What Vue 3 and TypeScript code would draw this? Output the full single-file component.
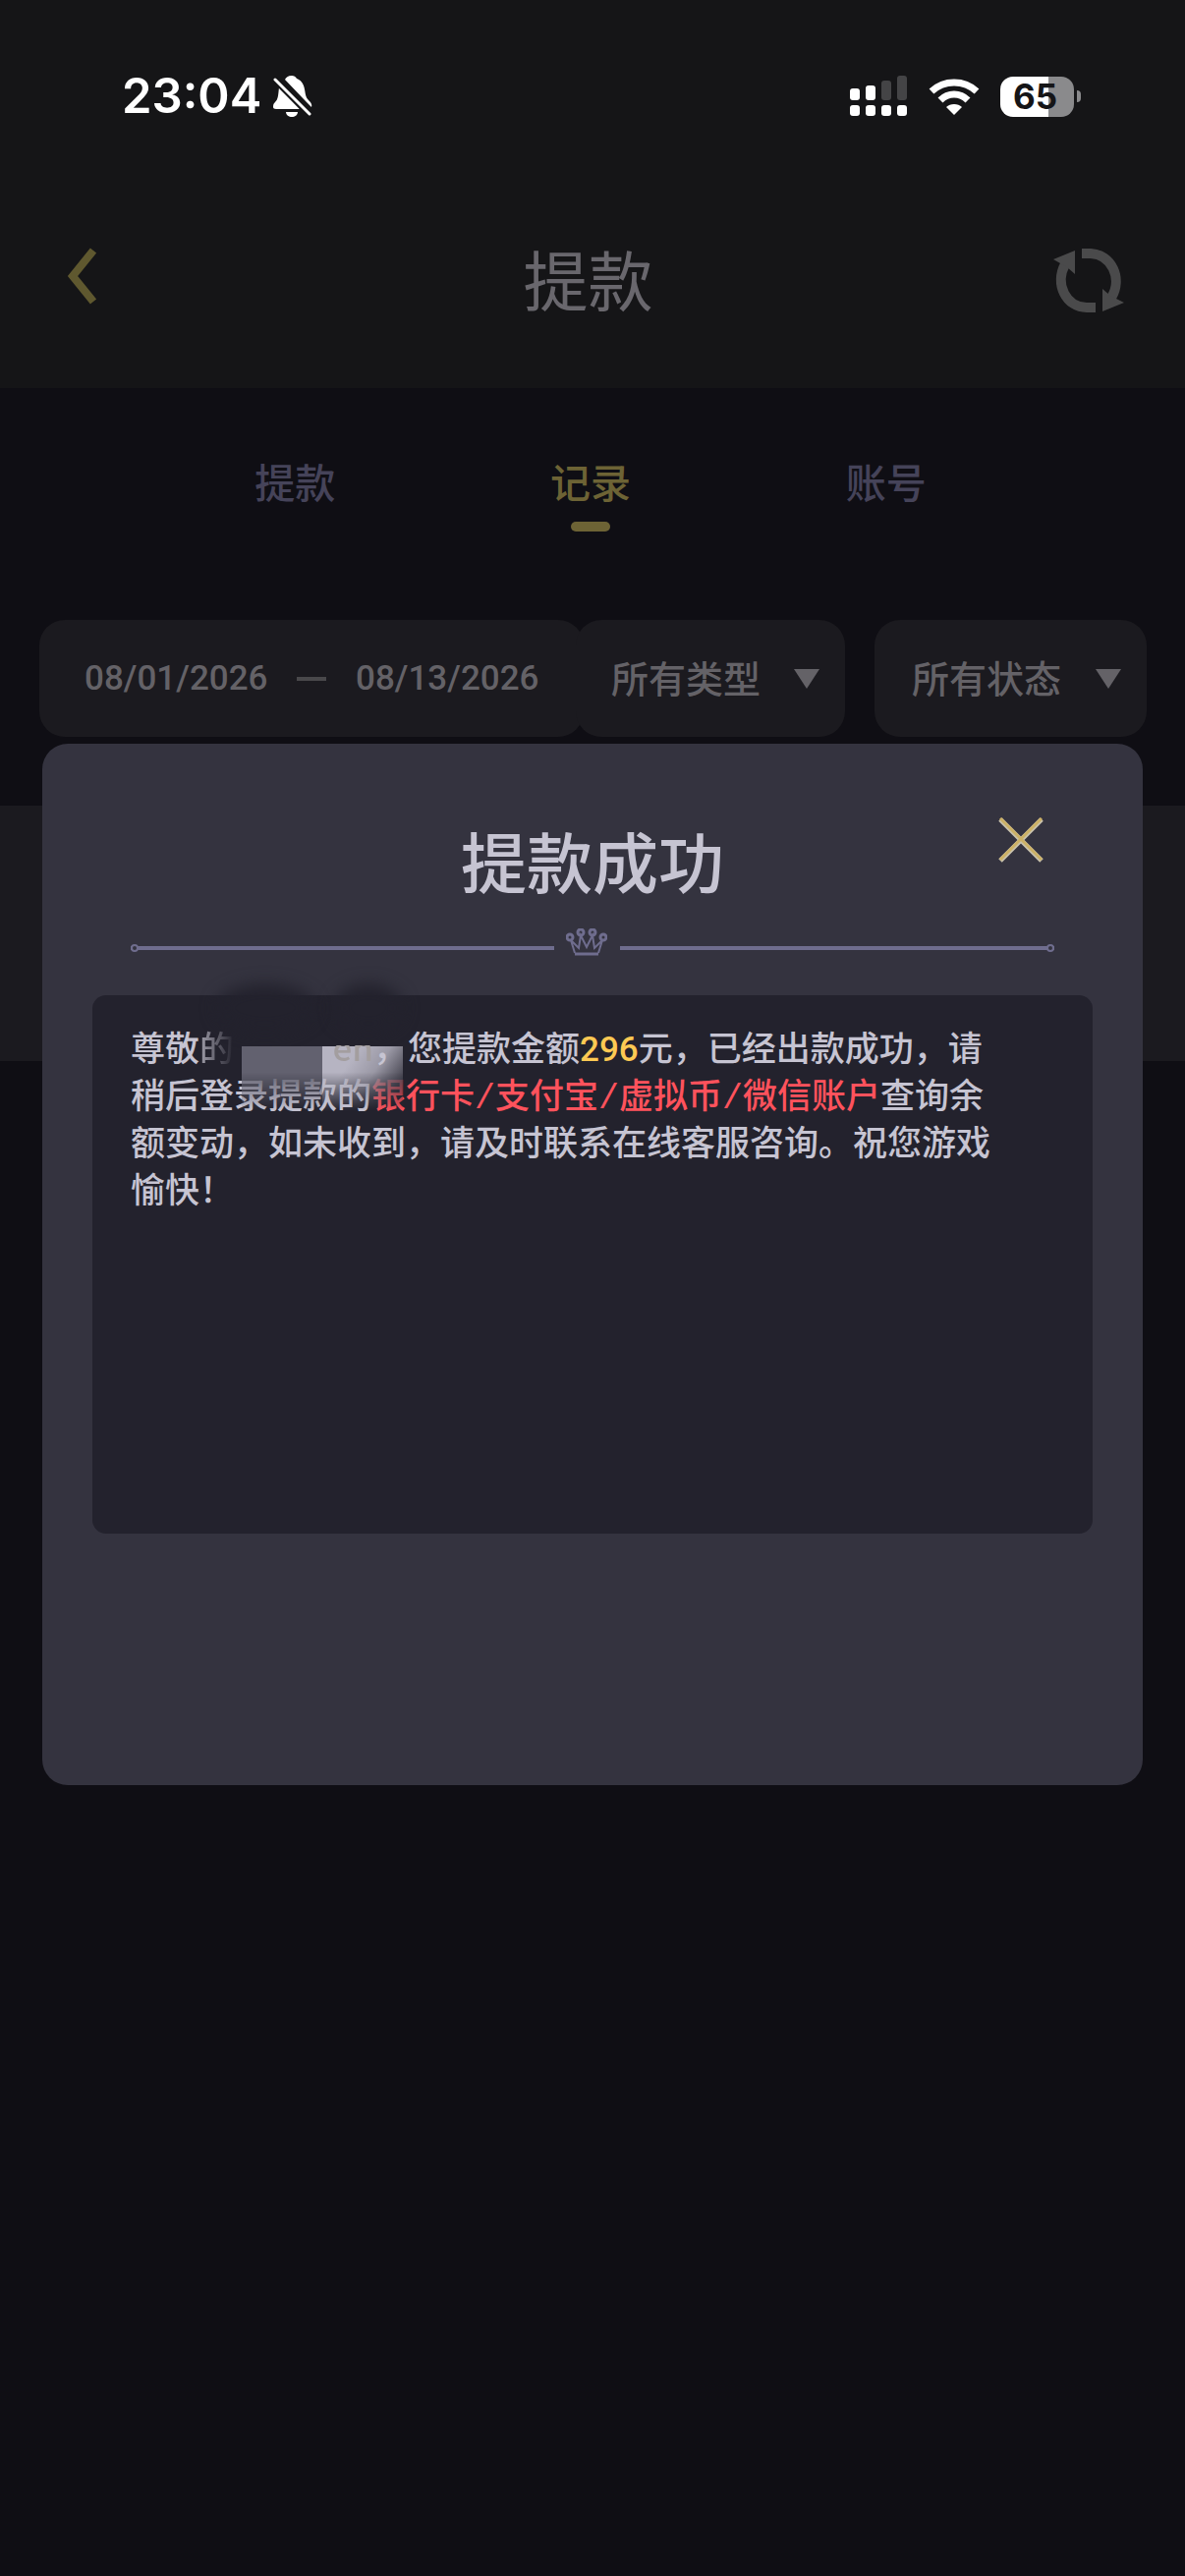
<script setup lang="ts">
import { ref } from 'vue'

interface Tab { id: string; label: string }

const tabs: Tab[] = [
  { id: 'withdraw', label: '提款' },
  { id: 'records', label: '记录' },
  { id: 'accounts', label: '账号' },
]
const active = ref('records')
const startDate = ref('08/01/2026')
const endDate = ref('08/13/2026')
const open = ref(true)
</script>

<template>
  <div class="page">
    <header class="header">
      <div class="status">
        <div class="clock">
          <span class="time">23:04</span>
          <svg class="bell" viewBox="0 0 40 42" aria-hidden="true">
            <path d="M19 0c-4 0-6 2-7 4L34 27l5 5c1-3-1-5-3-7-3-3-3-6-4-11C31 7 27 4 24 3 23 1 21 0 19 0z" fill="#fff" />
            <path d="M6 12c-1 9-1 12-4 15-2 2-2 3-2 5 0 1 1 2 3 2h24z" fill="#fff" />
            <path d="M13 37h12c0 3-3 5-6 5s-6-2-6-5z" fill="#fff" />
            <path d="M2 4l35 35" stroke="#151517" stroke-width="7" />
            <path d="M2 4l35 35" stroke="#fff" stroke-width="3" stroke-linecap="round" />
          </svg>
        </div>
        <div class="indicators">
          <svg class="signal" viewBox="0 0 58 42" aria-hidden="true">
            <g fill="#fff">
              <rect x="0" y="13" width="10" height="12" rx="3" />
              <rect x="16" y="10" width="10" height="15" rx="3" />
              <rect x="0" y="30" width="10" height="11" rx="3" />
              <rect x="16" y="30" width="10" height="11" rx="3" />
              <rect x="32" y="30" width="10" height="11" rx="3" />
              <rect x="48" y="30" width="10" height="11" rx="3" />
            </g>
            <g fill="#444446">
              <rect x="32" y="5" width="10" height="20" rx="3" />
              <rect x="48" y="0" width="10" height="25" rx="3" />
            </g>
          </svg>
          <svg class="wifi" viewBox="0 0 52 38" aria-hidden="true">
            <path d="M3 14C16 2 36 2 49 14" fill="none" stroke="#fff" stroke-width="7" />
            <path d="M12 23c8-8 20-8 28 0" fill="none" stroke="#fff" stroke-width="7" />
            <path d="M26 38l-8-8c4-4 12-4 16 0z" fill="#fff" />
          </svg>
          <div class="battery"><span class="level">65</span><i class="nub"></i></div>
        </div>
      </div>
      <div class="nav">
        <button class="icon-btn back" type="button" aria-label="返回">
          <svg viewBox="0 0 32 58" width="32" height="58"><path d="M27 3L6 29l21 26" fill="none" stroke="#5f582f" stroke-width="8" /></svg>
        </button>
        <h1 class="title">提款</h1>
        <button class="icon-btn" type="button" aria-label="刷新">
          <svg viewBox="0 0 72 66" width="72" height="66" fill="none">
            <path d="M29 5h9c21 1 33 25 21 45" stroke="#4a4a4b" stroke-width="10" />
            <path d="M43 60h-9C13 60 1 36 12 16" stroke="#4a4a4b" stroke-width="10" />
            <path d="M0 11L22 2v24l-8-7z" fill="#4a4a4b" />
            <path d="M72 55L50 64V41l8 7z" fill="#4a4a4b" />
          </svg>
        </button>
      </div>
    </header>

    <nav class="tabs">
      <button
        v-for="t in tabs"
        :key="t.id"
        type="button"
        class="tab"
        :class="{ active: active === t.id }"
        @click="active = t.id"
      >{{ t.label }}</button>
    </nav>

    <form class="filters" @submit.prevent>
      <div class="pill dates">
        <input v-model="startDate" class="date" type="text" aria-label="开始日期" />
        <span class="dash"></span>
        <input v-model="endDate" class="date" type="text" aria-label="结束日期" />
      </div>
      <div class="pill choice type">
        <select aria-label="类型"><option>所有类型</option></select>
        <svg class="caret" viewBox="0 0 26 20" aria-hidden="true"><path d="M0 0h26L13 20z" fill="#646267" /></svg>
      </div>
      <div class="pill choice state">
        <select aria-label="状态"><option>所有状态</option></select>
        <svg class="caret" viewBox="0 0 26 20" aria-hidden="true"><path d="M0 0h26L13 20z" fill="#646267" /></svg>
      </div>
    </form>
    <div class="record"></div>

    <section v-if="open" class="modal" role="dialog" aria-labelledby="modal-title">
      <h2 id="modal-title" class="modal-title">提款成功</h2>
      <button class="close" type="button" aria-label="关闭" @click="open = false">
        <svg viewBox="0 0 46 46" width="46" height="46">
          <path d="M2 2l42 42M44 2L2 44" stroke="#c9c2ae" stroke-width="5" />
          <path d="M2 1l42 42M44 1L2 43" stroke="#ccb166" stroke-width="3" />
        </svg>
      </button>
      <div class="divider">
        <i class="line left"></i>
        <svg class="crown" viewBox="0 0 42 28" fill="none" stroke="#6f6d8e" stroke-width="3" aria-hidden="true">
          <path d="M9 25L5 12l8 8 2-13 6 12 6-12 2 13 8-8-4 13" stroke-width="2" />
          <path d="M9 26h24" />
          <circle cx="4" cy="9" r="3" /><circle cx="15" cy="4" r="3" />
          <circle cx="27" cy="4" r="3" /><circle cx="38" cy="9" r="3" />
        </svg>
        <i class="line right"></i>
      </div>
      <div class="message">
        <i class="smudge one"></i>
        <i class="smudge two"></i>
        <p class="text">尊敬<span class="fading">的</span><span class="name">en</span><span class="comma">，</span>您提款金额<b class="amount">296</b>元，已经出款成功，请稍后登录提款的<span class="channels">银行卡/支付宝/虚拟币/微信账户</span>查询余额变动，如未收到，请及时联系在线客服咨询。祝您游戏愉快！</p>
        <i class="patch dim"></i>
        <i class="patch light"></i>
      </div>
    </section>
  </div>
</template>

<style>
body {
  margin: 0;
  background: #0f0e14;
}
</style>

<style scoped>
.page {
  position: relative;
  min-height: 100vh;
  background: #0f0e14;
  font-family: "Noto Sans CJK SC", sans-serif;
}
button, input, select {
  appearance: none;
  margin: 0;
  padding: 0;
  border: 0;
  background: none;
  font: inherit;
  color: inherit;
}
svg {
  display: block;
}
.header {
  height: 395px;
  background: #151517;
}
.status {
  display: flex;
  justify-content: space-between;
  align-items: center;
  height: 196px;
  padding: 0 106px 0 124px;
}
.clock, .indicators {
  display: flex;
  align-items: center;
}
.time {
  width: 154px;
  color: #fff;
  font: 600 49px/60px Inter, sans-serif;
}
.bell {
  width: 40px;
  height: 42px;
}
.signal {
  width: 58px;
  height: 42px;
  margin-right: 22px;
}
.wifi {
  width: 52px;
  height: 38px;
  margin-right: 21px;
}
.battery {
  display: flex;
  align-items: center;
}
.level {
  box-sizing: border-box;
  width: 75px;
  height: 41px;
  padding-right: 4px;
  border-radius: 13px;
  background: linear-gradient(90deg, #fff 65%, #8a8a8c 65%);
  color: #151517;
  font: 700 35px/41px Inter, sans-serif;
  text-align: center;
}
.nub {
  width: 4px;
  height: 12px;
  margin-left: 3px;
  border-radius: 0 6px 6px 0;
  background: #8a8a8c;
}
.nav {
  display: flex;
  justify-content: space-between;
  align-items: center;
  height: 180px;
  padding: 0 62px 0 68px;
}
.icon-btn {
  display: flex;
  width: 72px;
}
.back {
  width: 57px;
  padding-bottom: 10px;
}
.title {
  margin: 0;
  padding-bottom: 8px;
  color: #69676d;
  font-size: 66px;
  line-height: 90px;
  font-weight: 400;
}
.tabs {
  display: flex;
  padding: 66px 154px 90px 150px;
}
.tab {
  display: flex;
  flex: 1;
  flex-direction: column;
  align-items: center;
  color: #454359;
  font-size: 41px;
  line-height: 56px;
  font-weight: 500;
}
.tab::after {
  content: "";
  width: 40px;
  height: 10px;
  margin-top: 14px;
  border-radius: 5px;
}
.active {
  color: #6d6335;
}
.active::after {
  background: #6d6335;
}
.filters {
  display: flex;
  padding: 0 39px 0 40px;
  color: #646267;
}
.pill {
  display: flex;
  align-items: center;
  box-sizing: border-box;
  height: 119px;
  border-radius: 26px;
  background: #1b1a1f;
}
.dates {
  flex: 1;
  padding: 0 46px 0 46px;
  justify-content: space-between;
}
.date {
  width: 186px;
  font: 500 35px/48px Roboto, sans-serif;
}
.dash {
  width: 30px;
  height: 4px;
  background: #49484b;
}
.choice {
  justify-content: space-between;
  padding: 0 26px 0 36px;
}
.type {
  width: 274px;
  margin-left: -8px;
}
.state {
  width: 277px;
  margin-left: 30px;
  padding-left: 38px;
}
select {
  width: 160px;
  padding-bottom: 4px;
  font-size: 38px;
  line-height: 60px;
  font-weight: 500;
}
.caret {
  width: 26px;
  height: 20px;
}
.record {
  height: 260px;
  margin-top: 70px;
  background: #1b1a1f;
}
.modal {
  position: absolute;
  top: 757px;
  left: 43px;
  right: 43px;
  box-sizing: border-box;
  padding: 70px 51px 256px;
  border-radius: 26px;
  background: #34333f;
}
.modal-title {
  margin: 0;
  color: #c6c4d2;
  font-size: 67px;
  line-height: 96px;
  font-weight: 500;
  text-align: center;
}
.close {
  position: absolute;
  top: 75px;
  right: 101px;
}
.divider {
  display: flex;
  align-items: center;
  height: 28px;
  margin: 22px 39px 40px;
}
.line {
  position: relative;
  height: 4px;
  margin-top: 12px;
  background: #6f6d8e;
}
.line::before {
  content: "";
  position: absolute;
  top: -2px;
  width: 4px;
  height: 4px;
  border: 2px solid #6f6d8e;
  border-radius: 4px;
  background: #34333f;
}
.left {
  flex: 431;
}
.right {
  flex: 442;
}
.left::before {
  left: 0;
}
.right::before {
  right: 0;
}
.crown {
  width: 42px;
  height: 28px;
  margin: 0 13px 0 12px;
}
.message {
  position: relative;
  box-sizing: border-box;
  min-height: 548px;
  padding: 28px 101px 28px 39px;
  border-radius: 14px;
  background: #23222d;
}
.text {
  position: relative;
  margin: 0;
  color: #c6c4d2;
  font-size: 35px;
  line-height: 48px;
  font-weight: 500;
}
.fading {
  background: linear-gradient(90deg, #a09eaa, #23222d);
  background-clip: text;
  color: transparent;
}
.name {
  position: relative;
  z-index: 2;
  display: inline-block;
  width: 142px;
  height: 48px;
  background: linear-gradient(#23222d 48%, #a39e9f 48%);
  background-clip: text;
  color: transparent;
  text-align: right;
  vertical-align: top;
}
.comma {
  position: relative;
  z-index: 2;
}
.amount {
  color: #fdc953;
  font-family: Roboto, sans-serif;
  font-weight: 500;
  line-height: 35px;
}
.channels {
  color: #ff525c;
  font-family: "Liberation Mono", "Noto Sans CJK SC", monospace;
  line-height: 35px;
}
.smudge {
  position: absolute;
  top: -12px;
  height: 50px;
  border-radius: 50%;
  background: #23222d;
  filter: blur(8px);
}
.one {
  left: 126px;
  width: 100px;
}
.two {
  left: 246px;
  width: 70px;
}
.patch {
  position: absolute;
  top: 52px;
  width: 82px;
  height: 66px;
  mask-image: linear-gradient(#000 40%, transparent);
}
.dim {
  left: 152px;
  background: #62616f;
}
.light {
  left: 234px;
  background: linear-gradient(125deg, #b6b4c2 30%, #9b99a6 55%, #2b2a35 90%);
}
</style>
